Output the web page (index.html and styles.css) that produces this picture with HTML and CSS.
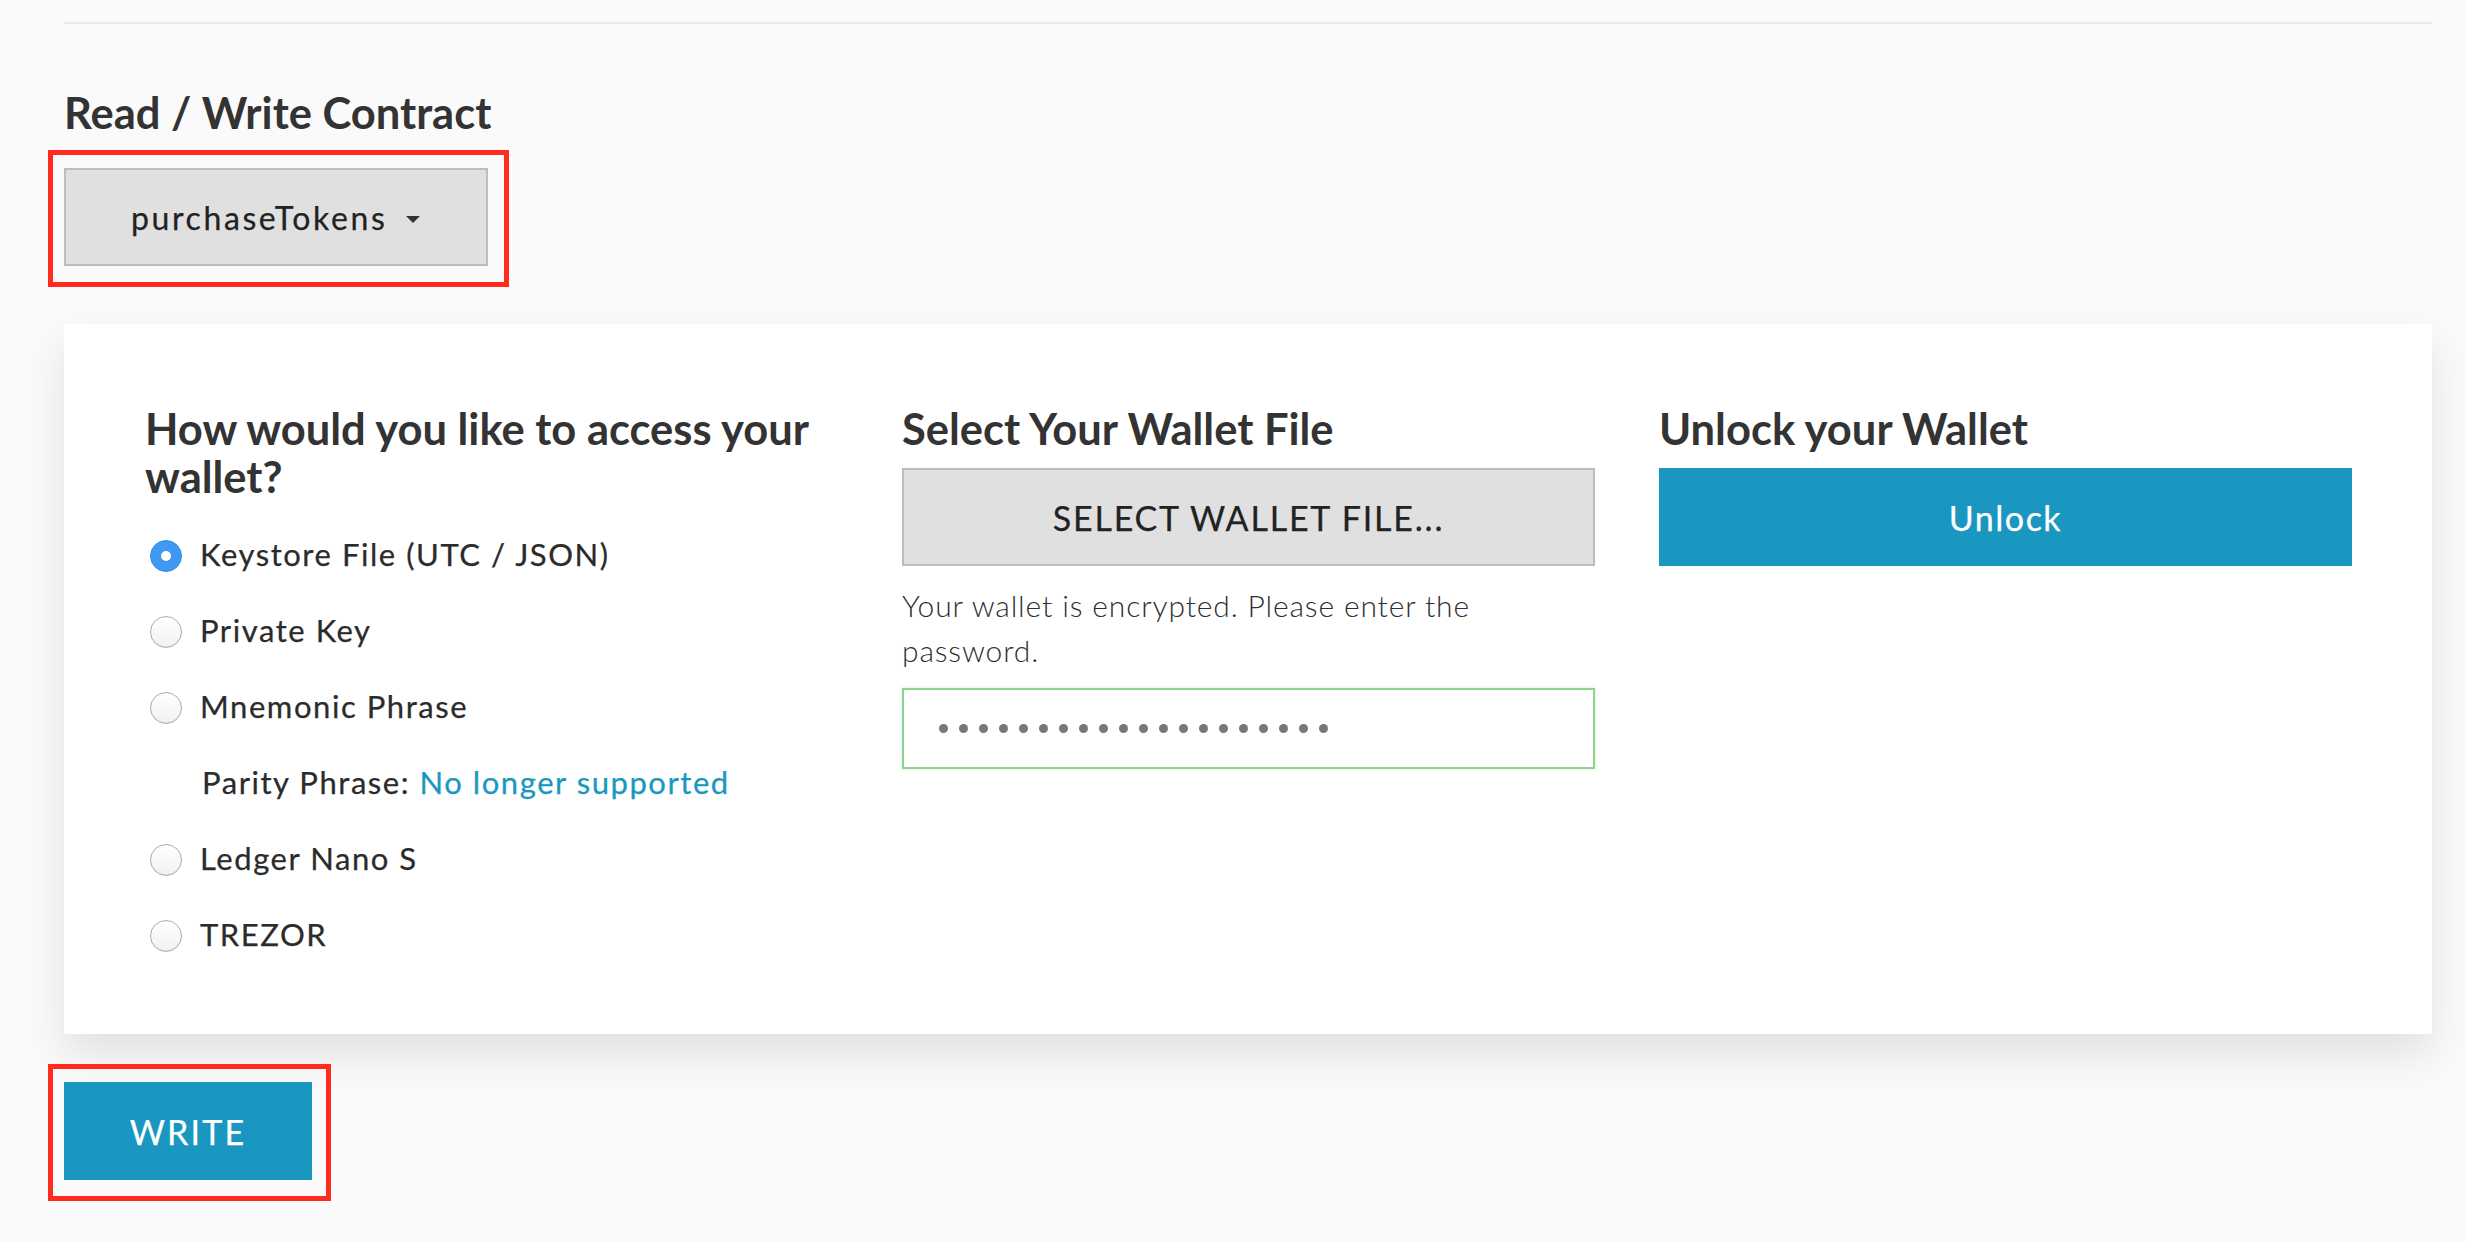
FILE: index.html
```html
<!DOCTYPE html>
<html lang="en">
<head>
<meta charset="utf-8">
<title>Read / Write Contract</title>
<link rel="stylesheet" href="styles.css">
</head>
<body>
<div class="page">
  <hr class="rule">
  <h3 class="title">Read / Write Contract</h3>
  <div class="hl hl-drop">
    <button class="dropdown">purchaseTokens<span class="caret"></span></button>
  </div>

  <section class="card">
    <div class="col">
      <h4 class="col-title">How would you like to access your wallet?</h4>
      <div class="opts">
        <label class="opt"><span class="radio checked"></span>Keystore File (UTC / JSON)</label>
        <label class="opt"><span class="radio"></span>Private Key</label>
        <label class="opt"><span class="radio"></span>Mnemonic Phrase</label>
        <div class="opt parity">Parity Phrase:&nbsp;<a class="link">No longer supported</a></div>
        <label class="opt"><span class="radio"></span>Ledger Nano S</label>
        <label class="opt"><span class="radio"></span>TREZOR</label>
      </div>
    </div>
    <div class="col">
      <h4 class="col-title">Select Your Wallet File</h4>
      <button class="btn-file">SELECT WALLET FILE...</button>
      <p class="note">Your wallet is encrypted. Please enter the password.</p>
      <div class="pw">
        <i></i><i></i><i></i><i></i><i></i><i></i><i></i><i></i><i></i><i></i>
        <i></i><i></i><i></i><i></i><i></i><i></i><i></i><i></i><i></i><i></i>
      </div>
    </div>
    <div class="col">
      <h4 class="col-title">Unlock your Wallet</h4>
      <button class="btn-primary btn-unlock">Unlock</button>
    </div>
  </section>

  <div class="hl hl-write">
    <button class="btn-primary btn-write">WRITE</button>
  </div>
</div>
</body>
</html>
```

FILE: styles.css
```css
* { box-sizing: border-box; }

html, body {
  margin: 0;
  padding: 0;
  background: #fafafa;
}

body {
  font-family: Lato, "Open Sans", "Liberation Sans", sans-serif;
  color: #333;
  font-size: 30px;
}

.page {
  padding: 22px 34px 40px 64px;
}

.rule {
  margin: 0;
  border: 0;
  height: 2px;
  background: #e8e8e8;
}

.title {
  margin: 64px 0 14px;
  font-size: 43.5px;
  line-height: 48px;
  font-weight: 700;
  color: #333;
}

.hl {
  display: inline-block;
  border: 5px solid #ff2b1d;
  margin-left: -16px;
}

.hl-drop {
  padding: 13px 16px 16px 11px;
}

.hl-write {
  padding: 13px 14px 16px 11px;
  margin-top: 30px;
}

.dropdown {
  display: flex;
  align-items: center;
  height: 98px;
  width: 424px;
  padding: 0 0 0 65px;
  background: #e0e0e0;
  border: 2px solid #bdbdbd;
  font-family: inherit;
  font-size: 32px;
  letter-spacing: 2.6px;
  color: #222;
  gap: 19px;
  -webkit-text-stroke: 0.25px #222;
}

.caret {
  width: 0;
  height: 0;
  border-left: 7px solid transparent;
  border-right: 7px solid transparent;
  border-top: 7px solid #333;
  margin-top: 4px;
}

.card {
  margin-top: 37px;
  background: #fff;
  display: grid;
  grid-template-columns: 1fr 1fr 1fr;
  column-gap: 64px;
  padding: 80px 80px 62px 81px;
  box-shadow: 0 20px 40px rgba(0, 0, 0, 0.1);
}

.col-title {
  margin: 0;
  font-size: 43.5px;
  line-height: 48px;
  font-weight: 700;
  color: #333;
}

.opts {
  margin-top: 16px;
}

.opt {
  display: flex;
  align-items: center;
  height: 76px;
  font-size: 31px;
  letter-spacing: 1.55px;
  color: #2b2b2b;
  -webkit-text-stroke: 0.25px #2b2b2b;
}

.radio {
  flex: none;
  width: 32px;
  height: 32px;
  border-radius: 50%;
  margin: 4px 18px 0 5px;
  background: linear-gradient(#ffffff, #f2f2f2);
  border: 1.5px solid #adadad;
  box-shadow: inset 0 -1px 1px rgba(0, 0, 0, 0.06);
  position: relative;
}

.radio.checked {
  background: #3f98f2;
  border-color: #3a8fe6;
  box-shadow: none;
}

.radio.checked::after {
  content: "";
  position: absolute;
  left: 50%;
  top: 50%;
  width: 10px;
  height: 10px;
  margin: -5px 0 0 -5px;
  border-radius: 50%;
  background: #fff;
}

.parity {
  padding-left: 57px;
}

.link {
  color: #1a97c1;
  text-decoration: none;
  -webkit-text-stroke: 0.25px #1a97c1;
}

.btn-file {
  display: block;
  width: 100%;
  height: 98px;
  margin-top: 16px;
  background: #e0e0e0;
  border: 2px solid #bdbdbd;
  font-family: inherit;
  font-size: 34px;
  letter-spacing: 1.8px;
  color: #222;
  -webkit-text-stroke: 0.25px #222;
}

.note {
  margin: 17px 0 15px;
  font-size: 30px;
  line-height: 45px;
  font-weight: 300;
  letter-spacing: 0.85px;
  color: #2f2f2f;
  padding-right: 60px;
}

.pw {
  height: 81px;
  border: 2px solid #90d290;
  box-shadow: 0 0 3px rgba(120, 200, 120, 0.35);
  background: #fff;
  display: flex;
  align-items: center;
  gap: 11px;
  padding-left: 35px;
}

.pw i {
  display: block;
  width: 9px;
  height: 9px;
  border-radius: 50%;
  background: #777;
}

.btn-primary {
  display: block;
  height: 98px;
  border: 0;
  background: #1a97c0;
  color: #fff;
  font-family: inherit;
  font-size: 34px;
  -webkit-text-stroke: 0.25px #fff;
}

.btn-unlock {
  width: 100%;
  margin-top: 16px;
  letter-spacing: 1.5px;
}

.btn-write {
  width: 248px;
  letter-spacing: 2.2px;
}
```
